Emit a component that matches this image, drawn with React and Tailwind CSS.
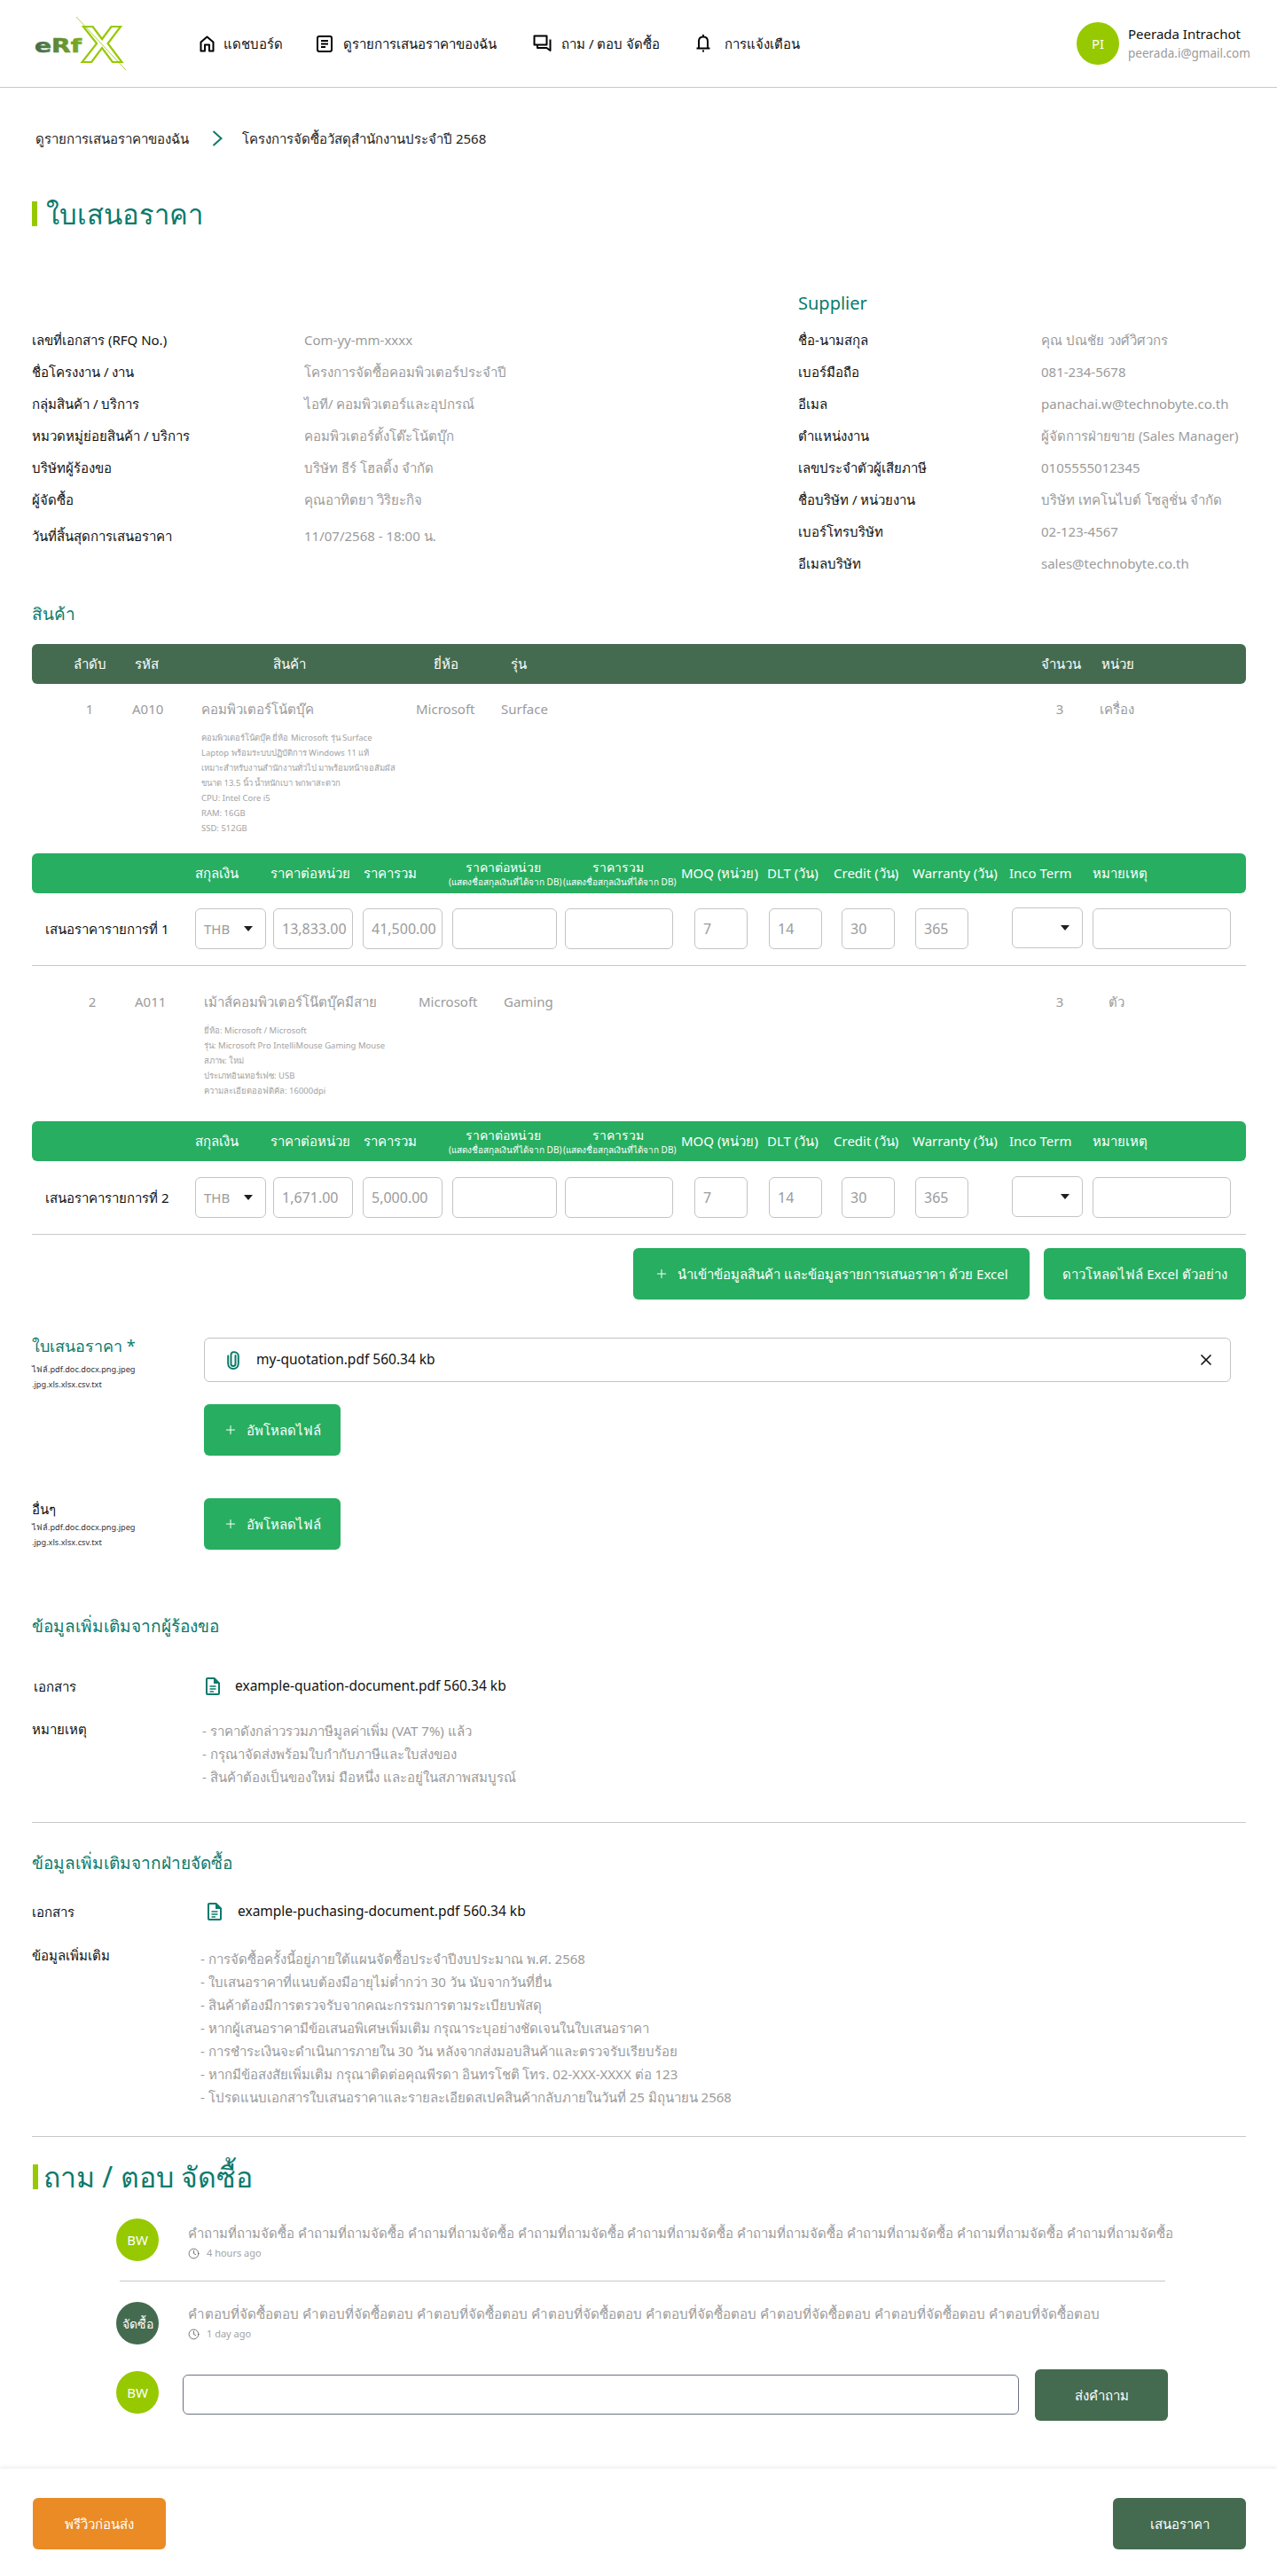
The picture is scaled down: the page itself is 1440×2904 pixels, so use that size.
import { Clock, X, Plus } from 'lucide-react';

const FONT = "font-['Noto_Sans','Liberation_Sans',sans-serif]";

const requestInfo = [
  ['เลขที่เอกสาร (RFQ No.)', 'Com-yy-mm-xxxx'],
  ['ชื่อโครงงาน / งาน', 'โครงการจัดซื้อคอมพิวเตอร์ประจำปี'],
  ['กลุ่มสินค้า / บริการ', 'ไอที/ คอมพิวเตอร์และอุปกรณ์'],
  ['หมวดหมู่ย่อยสินค้า / บริการ', 'คอมพิวเตอร์ตั้งโต๊ะโน้ตบุ๊ก'],
  ['บริษัทผู้ร้องขอ', 'บริษัท ธีร์ โฮลดิ้ง จำกัด'],
  ['ผู้จัดซื้อ', 'คุณอาทิตยา วิริยะกิจ'],
];

const supplierInfo = [
  ['ชื่อ-นามสกุล', 'คุณ ปณชัย วงศ์วิศวกร'],
  ['เบอร์มือถือ', '081-234-5678'],
  ['อีเมล', 'panachai.w@technobyte.co.th'],
  ['ตำแหน่งงาน', 'ผู้จัดการฝ่ายขาย (Sales Manager)'],
  ['เลขประจำตัวผู้เสียภาษี', '0105555012345'],
  ['ชื่อบริษัท / หน่วยงาน', 'บริษัท เทคโนไบต์ โซลูชั่น จำกัด'],
  ['เบอร์โทรบริษัท', '02-123-4567'],
  ['อีเมลบริษัท', 'sales@technobyte.co.th'],
];

const laptopSpec = [
  'คอมพิวเตอร์โน้ตบุ๊ค ยี่ห้อ Microsoft รุ่น Surface',
  'Laptop พร้อมระบบปฏิบัติการ Windows 11 แท้',
  'เหมาะสำหรับงานสำนักงานทั่วไป มาพร้อมหน้าจอสัมผัส',
  'ขนาด 13.5 นิ้ว น้ำหนักเบา พกพาสะดวก',
  'CPU: Intel Core i5',
  'RAM: 16GB',
  'SSD: 512GB',
];

const mouseSpec = [
  'ยี่ห้อ: Microsoft / Microsoft',
  'รุ่น: Microsoft Pro IntelliMouse Gaming Mouse',
  'สภาพ: ใหม่',
  'ประเภทอินเทอร์เฟซ: USB',
  'ความละเอียดออฟติคัล: 16000dpi',
];

const requesterNotes = [
  '- ราคาดังกล่าวรวมภาษีมูลค่าเพิ่ม (VAT 7%) แล้ว',
  '- กรุณาจัดส่งพร้อมใบกำกับภาษีและใบส่งของ',
  '- สินค้าต้องเป็นของใหม่ มือหนึ่ง และอยู่ในสภาพสมบูรณ์',
];

const purchasingNotes = [
  '- การจัดซื้อครั้งนี้อยู่ภายใต้แผนจัดซื้อประจำปีงบประมาณ พ.ศ. 2568',
  '- ใบเสนอราคาที่แนบต้องมีอายุไม่ต่ำกว่า 30 วัน นับจากวันที่ยื่น',
  '- สินค้าต้องมีการตรวจรับจากคณะกรรมการตามระเบียบพัสดุ',
  '- หากผู้เสนอราคามีข้อเสนอพิเศษเพิ่มเติม กรุณาระบุอย่างชัดเจนในใบเสนอราคา',
  '- การชำระเงินจะดำเนินการภายใน 30 วัน หลังจากส่งมอบสินค้าและตรวจรับเรียบร้อย',
  '- หากมีข้อสงสัยเพิ่มเติม กรุณาติดต่อคุณพีรดา อินทรโชติ โทร. 02-XXX-XXXX ต่อ 123',
  '- โปรดแนบเอกสารใบเสนอราคาและรายละเอียดสเปคสินค้ากลับภายในวันที่ 25 มิถุนายน 2568',
];

function Logo() {
  return (
    <svg width="110" height="80" viewBox="0 0 110 80" className="shrink-0">
      <defs>
        <linearGradient id="erfGrad" x1="0" x2="1" y1="0" y2="0">
          <stop offset="0" stopColor="#446b4f" />
          <stop offset="1" stopColor="#7fae1e" />
        </linearGradient>
      </defs>
      <text x="0" y="50" fontFamily="'DejaVu Sans', sans-serif" fontWeight="700" fontSize="22" fill="url(#erfGrad)" stroke="url(#erfGrad)" strokeWidth="0.6" textLength="53" lengthAdjust="spacingAndGlyphs">eRf</text>
      <text x="53" y="61" fontFamily="'Liberation Sans', sans-serif" fontWeight="700" fontSize="58" fill="none" stroke="#97c900" strokeWidth="2" textLength="46" lengthAdjust="spacingAndGlyphs">X</text>
      <line x1="47" y1="10" x2="103" y2="70" stroke="#97c900" strokeWidth="0.8" />
    </svg>
  );
}

function HomeIcon() {
  return (
    <svg width="17" height="19" viewBox="0 0 17 19" fill="none" stroke="#000" strokeWidth="2" strokeLinejoin="round">
      <path d="M1.5 17.5V7.5L8.5 1.5L15.5 7.5V17.5H11V10.5H6V17.5Z" />
    </svg>
  );
}

function DocIcon() {
  return (
    <svg width="18" height="19" viewBox="0 0 18 19" fill="none" stroke="#000" strokeWidth="2">
      <rect x="1" y="1" width="16" height="17" rx="2" />
      <path d="M5 6H13M5 9.5H13M5 13H10" />
    </svg>
  );
}

function ChatIcon() {
  return (
    <svg width="21" height="20" viewBox="0 0 21 20" fill="none" stroke="#000" strokeWidth="2" strokeLinejoin="round">
      <path d="M1.5 1.5H15.5V11.5H1.5Z" />
      <path d="M19.5 5.5V18L15.5 15H5V11.5" />
    </svg>
  );
}

function BellIcon() {
  return (
    <svg width="16" height="20" viewBox="0 0 16 20" fill="none" stroke="#000" strokeWidth="2" strokeLinejoin="round">
      <path d="M3 15V7.5C3 4.5 5 2.5 8 2.5C11 2.5 13 4.5 13 7.5V15" />
      <path d="M0.5 15.5H15.5" />
      <path d="M8 0V2M7 18.5H9" />
    </svg>
  );
}

function ClipIcon() {
  return (
    <svg width="14" height="21" viewBox="0 0 14 21" fill="none" stroke="#0b7a6b" strokeWidth="2" strokeLinecap="round" className="shrink-0">
      <path d="M9.5 5V14.5C9.5 16 8.5 17 7 17C5.5 17 4.5 16 4.5 14.5V4.5C4.5 2.8 5.6 1.2 7.5 1.2C10 1.2 12.8 2.5 12.8 5.5V14C12.8 17.5 10.5 20 7 20C3.5 20 1.2 17.5 1.2 14V5.5" />
    </svg>
  );
}

function FileIcon() {
  return (
    <svg width="16" height="20" viewBox="0 0 16 20" className="shrink-0">
      <path d="M2 0H10L16 6V18C16 19.1 15.1 20 14 20H2C0.9 20 0 19.1 0 18V2C0 0.9 0.9 0 2 0Z" fill="#0b7a6b" />
      <path d="M2 2H9.2L14 6.8V18H2Z" fill="#fff" />
      <path d="M9 1V7H15" fill="#0b7a6b" />
      <path d="M4.5 10H11.5M4.5 13H11.5M4.5 16H9" stroke="#0b7a6b" strokeWidth="1.6" />
    </svg>
  );
}

function Caret() {
  return (
    <svg width="10" height="6" viewBox="0 0 10 6" className="shrink-0">
      <path d="M0 0H10L5 6Z" fill="#1f1f1f" />
    </svg>
  );
}

function Avatar({ label, dark }) {
  return (
    <div className={`w-12 h-12 shrink-0 rounded-full flex items-center justify-center text-white ${dark ? 'bg-[#446b4f] text-[14px]' : 'bg-[#97c900] text-[15px]'}`}>
      {label}
    </div>
  );
}

function PageTitle({ children, className, textClass }) {
  return (
    <div className={`flex items-center h-7 ${className}`}>
      <div className="w-1.5 h-7 bg-[#97c900] shrink-0" />
      <h1 className={`leading-7 text-[#0b7a6b] whitespace-nowrap ${textClass}`}>{children}</h1>
    </div>
  );
}

function SectionHeading({ children, className }) {
  return <h2 className={`h-7 text-[19px] leading-7 text-[#0b7a6b] ${className}`}>{children}</h2>;
}

function InfoRow({ label, value, labelWidth, className = '' }) {
  return (
    <div className={`flex items-center h-9 text-[15px] ${className}`}>
      <div className={`${labelWidth} shrink-0 text-[#111]`}>{label}</div>
      <div className="text-[#9b9b9b] whitespace-nowrap">{value}</div>
    </div>
  );
}

function SpecLines({ lines }) {
  return (
    <div className="text-[9.5px] leading-[17px] text-[#a3a3a3] whitespace-nowrap">
      {lines.map((l) => (
        <div key={l}>{l}</div>
      ))}
    </div>
  );
}

function ProductRow({ no, code, name, brand, model, qty, unit, spec, offset, brandWidth, className }) {
  return (
    <div className={`flex items-start text-[15px] leading-6 text-[#9b9b9b] ${offset} ${className}`}>
      <div className="w-16 text-center shrink-0">{no}</div>
      <div className="pl-4 w-[94px] shrink-0">{code}</div>
      <div className="w-[242px] shrink-0">
        <div className="whitespace-nowrap">{name}</div>
        <div className="mt-3">
          <SpecLines lines={spec} />
        </div>
      </div>
      <div className="w-[96px] shrink-0">{brand}</div>
      <div className={`${brandWidth} shrink-0`}>{model}</div>
      <div className="w-16 text-center shrink-0">{qty}</div>
      <div className="w-16 text-center shrink-0">{unit}</div>
    </div>
  );
}

function QuoteHeader({ className }) {
  return (
    <div className={`h-[45px] rounded-md bg-[#27ae60] text-white pl-[184px] grid grid-cols-[85px_105px_96px_129px_133px_97px_75px_89px_109px_94px_1fr] items-center text-[15px] whitespace-nowrap ${className}`}>
      <div>สกุลเงิน</div>
      <div>ราคาต่อหน่วย</div>
      <div>ราคารวม</div>
      <div className="w-[122px] text-center">
        <div className="text-[14px] leading-4">ราคาต่อหน่วย</div>
        <div className="text-[10px] leading-3 mt-0.5">(แสดงชื่อสกุลเงินที่ได้จาก DB)</div>
      </div>
      <div className="w-[123px] text-center">
        <div className="text-[14px] leading-4">ราคารวม</div>
        <div className="text-[10px] leading-3 mt-0.5">(แสดงชื่อสกุลเงินที่ได้จาก DB)</div>
      </div>
      <div>MOQ (หน่วย)</div>
      <div>DLT (วัน)</div>
      <div>Credit (วัน)</div>
      <div>Warranty (วัน)</div>
      <div>Inco Term</div>
      <div>หมายเหตุ</div>
    </div>
  );
}

function Field({ value, className }) {
  return (
    <div className={`h-[46px] shrink-0 rounded-md border border-[#c4c4c4] flex items-center pl-[9px] text-base text-[#9b9b9b] ${className}`}>
      {value}
    </div>
  );
}

function Select({ value, className }) {
  return (
    <div className={`h-[46px] w-20 shrink-0 rounded-md border border-[#c4c4c4] flex items-center justify-between pl-[9px] pr-3.5 text-[15px] text-[#9b9b9b] ${className}`}>
      <span>{value}</span>
      <Caret />
    </div>
  );
}

function QuoteRow({ index, unitPrice, total, className }) {
  return (
    <div className={`flex items-center ${className}`}>
      <div className="w-[184px] shrink-0 pl-[15px] text-[15px] text-[#111] whitespace-nowrap">เสนอราคารายการที่ {index}</div>
      <Select value="THB" />
      <Field value={unitPrice} className="w-[90px] ml-2" />
      <Field value={total} className="w-[90px] ml-[11px]" />
      <Field className="w-[118px] ml-[11px]" />
      <Field className="w-[122px] ml-[9px]" />
      <Field value="7" className="w-[60px] ml-6" />
      <Field value="14" className="w-[60px] ml-6" />
      <Field value="30" className="w-[60px] ml-[22px]" />
      <Field value="365" className="w-[60px] ml-[23px]" />
      <Select className="ml-[49px] -mt-0.5" />
      <Field className="w-[156px] ml-[11px]" />
    </div>
  );
}

function UploadButton() {
  return (
    <button className="w-[154px] h-[58px] rounded-md bg-[#27ae60] text-white text-[15px] flex items-center justify-center gap-2.5">
      <Plus size={16} strokeWidth={1.5} />
      อัพโหลดไฟล์
    </button>
  );
}

function FileTypes() {
  return (
    <div className="text-[9.2px] leading-[17px] text-[#333] whitespace-nowrap">
      <div>ไฟล์.pdf.doc.docx.png.jpeg</div>
      <div>.jpg.xls.xlsx.csv.txt</div>
    </div>
  );
}

function QuestionRow({ avatar, dark, text, time, className, textClass }) {
  return (
    <div className={`flex pl-[95px] ${className}`}>
      <Avatar label={avatar} dark={dark} />
      <div className="ml-[33px]">
        <div className={`leading-6 text-[#9b9b9b] whitespace-nowrap ${textClass}`}>{text}</div>
        <div className="mt-[3px] h-4 flex items-center gap-2 text-[11px] text-[#a3a3a3]">
          <Clock size={13} strokeWidth={1.5} className="text-[#555]" />
          {time}
        </div>
      </div>
    </div>
  );
}

export default function App() {
  const question = Array(9).fill('คำถามที่ถามจัดซื้อ').join(' ');
  const answer = Array(8).fill('คำตอบที่จัดซื้อตอบ').join(' ');

  return (
    <div className={`${FONT} bg-white w-[1440px] h-[2904px] overflow-hidden`}>
      <header className="h-[99px] border-b border-[#c8c8c8] flex items-center">
        <div className="ml-[39px] w-[186px] shrink-0">
          <Logo />
        </div>
        <nav className="flex items-center text-[15px] text-[#111] whitespace-nowrap">
          <div className="w-[132px] flex items-center">
            <div className="w-[27px]"><HomeIcon /></div>
            แดชบอร์ด
          </div>
          <div className="w-[244px] flex items-center">
            <div className="w-[30px]"><DocIcon /></div>
            ดูรายการเสนอราคาของฉัน
          </div>
          <div className="w-[184px] flex items-center">
            <div className="w-8"><ChatIcon /></div>
            ถาม / ตอบ จัดซื้อ
          </div>
          <div className="flex items-center">
            <div className="w-8"><BellIcon /></div>
            การแจ้งเตือน
          </div>
        </nav>
        <div className="ml-auto w-[226px] flex items-center">
          <Avatar label="PI" />
          <div className="ml-2.5 whitespace-nowrap">
            <div className="text-[15px] leading-[22px] text-[#111]">Peerada Intrachot</div>
            <div className="text-[13.5px] leading-[22px] text-[#9b9b9b]">peerada.i@gmail.com</div>
          </div>
        </div>
      </header>

      <main className="pl-9 pr-[35px]">
        <div className="pt-[45px] pl-1 flex items-center h-[69px] text-[15px] text-[#222] whitespace-nowrap">
          <span className="w-[199px]">ดูรายการเสนอราคาของฉัน</span>
          <svg width="12" height="18" viewBox="0 0 12 18" fill="none" stroke="#0b7a6b" strokeWidth="2" className="mr-[22px]">
            <path d="M1.5 1L10.5 9L1.5 17" />
          </svg>
          โครงการจัดซื้อวัสดุสำนักงานประจำปี 2568
        </div>

        <PageTitle className="mt-[59px]" textClass="ml-2.5 text-[31px]">ใบเสนอราคา</PageTitle>

        <div className="flex mt-[73px]">
          <div className="w-[864px] shrink-0 pt-[37px]">
            {requestInfo.map(([label, value]) => (
              <InfoRow key={label} label={label} value={value} labelWidth="w-[307px]" />
            ))}
            <InfoRow label="วันที่สิ้นสุดการเสนอราคา" value="11/07/2568 - 18:00 น." labelWidth="w-[307px]" className="mt-[5px]" />
          </div>
          <div>
            <h2 className="h-7 text-[20px] leading-7 text-[#0b7a6b]">Supplier</h2>
            <div className="mt-[9px]">
              {supplierInfo.map(([label, value]) => (
                <InfoRow key={label} label={label} value={value} labelWidth="w-[274px]" />
              ))}
            </div>
          </div>
        </div>

        <SectionHeading className="mt-[25px]">สินค้า</SectionHeading>

        <div className="mt-5 h-[45px] rounded-md bg-[#446b4f] text-white text-[15px] flex items-center pl-[33px] whitespace-nowrap">
          <div className="w-16 text-center">ลำดับ</div>
          <div className="w-16 text-center">รหัส</div>
          <div className="w-[258px] text-center">สินค้า</div>
          <div className="w-24 text-center">ยี่ห้อ</div>
          <div className="w-[68px] text-center">รุ่น</div>
          <div className="w-[545px]" />
          <div className="w-16 text-center">จำนวน</div>
          <div className="w-16 text-center">หน่วย</div>
        </div>

        <ProductRow no="1" code="A010" name="คอมพิวเตอร์โน้ตบุ๊ค" brand="Microsoft" model="Surface" qty="3" unit="เครื่อง" spec={laptopSpec} offset="pl-[33px]" brandWidth="w-[598px]" className="pt-4" />
        <QuoteHeader className="mt-5" />
        <QuoteRow index="1" unitPrice="13,833.00" total="41,500.00" className="mt-[17px]" />
        <div className="mt-[18px] border-b border-[#c8c8c8]" />

        <ProductRow no="2" code="A011" name="เม้าส์คอมพิวเตอร์โน๊ตบุ๊คมีสาย" brand="Microsoft" model="Gaming" qty="3" unit="ตัว" spec={mouseSpec} offset="pl-9" brandWidth="w-[595px]" className="pt-7" />
        <QuoteHeader className="mt-[26px]" />
        <QuoteRow index="2" unitPrice="1,671.00" total="5,000.00" className="mt-[18px]" />
        <div className="mt-[18px] border-b border-[#c8c8c8]" />

        <div className="mt-[15px] flex justify-end gap-4 text-white text-[15px]">
          <button className="w-[447px] h-[58px] rounded-md bg-[#27ae60] flex items-center justify-center gap-2.5">
            <Plus size={16} strokeWidth={1.5} />
            นำเข้าข้อมูลสินค้า และข้อมูลรายการเสนอราคา ด้วย Excel
          </button>
          <button className="w-[228px] h-[58px] rounded-md bg-[#27ae60]">ดาวโหลดไฟล์ Excel ตัวอย่าง</button>
        </div>

        <div className="mt-[38px] flex">
          <div className="w-[194px] shrink-0">
            <div className="h-7 text-[18px] leading-7 text-[#0b7a6b] whitespace-nowrap">ใบเสนอราคา *</div>
            <div className="mt-1">
              <FileTypes />
            </div>
          </div>
          <div className="pt-[5px] w-[1158px]">
            <div className="h-[50px] rounded-md border border-[#c4c4c4] flex items-center pl-[25px] pr-[17px] text-[15.5px] text-[#111]">
              <ClipIcon />
              <span className="ml-[19px]">my-quotation.pdf 560.34 kb</span>
              <X size={20} strokeWidth={2} className="ml-auto text-[#111]" />
            </div>
            <div className="mt-[25px]">
              <UploadButton />
            </div>
          </div>
        </div>

        <div className="mt-[48px] flex">
          <div className="w-[194px] shrink-0">
            <div className="h-6 text-[15px] leading-6 text-[#111]">อื่นๆ</div>
            <FileTypes />
          </div>
          <UploadButton />
        </div>

        <SectionHeading className="mt-[72px]">ข้อมูลเพิ่มเติมจากผู้ร้องขอ</SectionHeading>

        <div className="mt-[42px] flex items-center h-6 text-[15px] text-[#111]">
          <div className="w-[196px] shrink-0 pl-0.5">เอกสาร</div>
          <FileIcon />
          <span className="ml-[17px] text-[15.5px]">example-quation-document.pdf 560.34 kb</span>
        </div>

        <div className="mt-[25px] flex text-[15px]">
          <div className="w-[192px] shrink-0 -mt-0.5 leading-[26px] text-[#111]">หมายเหตุ</div>
          <div className="leading-[26px] text-[#9b9b9b] whitespace-nowrap">
            {requesterNotes.map((n) => (
              <div key={n}>{n}</div>
            ))}
          </div>
        </div>

        <div className="mt-[38px] border-b border-[#c8c8c8]" />

        <SectionHeading className="mt-[31px]">ข้อมูลเพิ่มเติมจากฝ่ายจัดซื้อ</SectionHeading>

        <div className="mt-[29px] flex items-center h-6 text-[15px] text-[#111]">
          <div className="w-[198px] shrink-0">เอกสาร</div>
          <FileIcon />
          <span className="ml-[18px] text-[15.5px]">example-puchasing-document.pdf 560.34 kb</span>
        </div>

        <div className="mt-[28px] flex text-[15px]">
          <div className="w-[190px] shrink-0 -mt-1 leading-[26px] text-[#111]">ข้อมูลเพิ่มเติม</div>
          <div className="leading-[26px] text-[#9b9b9b] whitespace-nowrap">
            {purchasingNotes.map((n) => (
              <div key={n}>{n}</div>
            ))}
          </div>
        </div>

        <div className="mt-[31px] border-b border-[#c8c8c8]" />

        <PageTitle className="mt-[31px] ml-px" textClass="ml-[6px] text-[32px]">ถาม / ตอบ จัดซื้อ</PageTitle>

        <QuestionRow avatar="BW" text={question} time="4 hours ago" textClass="text-[14.9px]" className="mt-[33px] [&>div:last-child]:pt-1" />
        <div className="mt-[22px] ml-[99px] w-[1179px] border-b border-[#c8c8c8]" />
        <QuestionRow avatar="จัดซื้อ" dark text={answer} time="1 day ago" textClass="text-[15.2px]" className="mt-[23px] [&>div:last-child]:pt-px" />

        <div className="mt-[28px] flex items-start pl-[95px]">
          <div className="mt-0.5">
            <Avatar label="BW" />
          </div>
          <input className="mt-1.5 ml-[27px] w-[943px] h-[45px] rounded-md border border-[#6b7280] outline-none" />
          <button className="ml-[18px] w-[150px] h-[58px] rounded-md bg-[#446b4f] text-white text-[15px]">ส่งคำถาม</button>
        </div>
      </main>

      <footer className="mt-[54px] h-[122px] shadow-[0_-2px_4px_rgba(0,0,0,0.07)] pt-[33px] pl-[37px] pr-[35px] flex items-start justify-between text-white text-[15px]">
        <button className="w-[150px] h-[58px] rounded-md bg-[#ea8b25]">พรีวิวก่อนส่ง</button>
        <button className="w-[150px] h-[58px] rounded-md bg-[#446b4f]">เสนอราคา</button>
      </footer>
    </div>
  );
}
